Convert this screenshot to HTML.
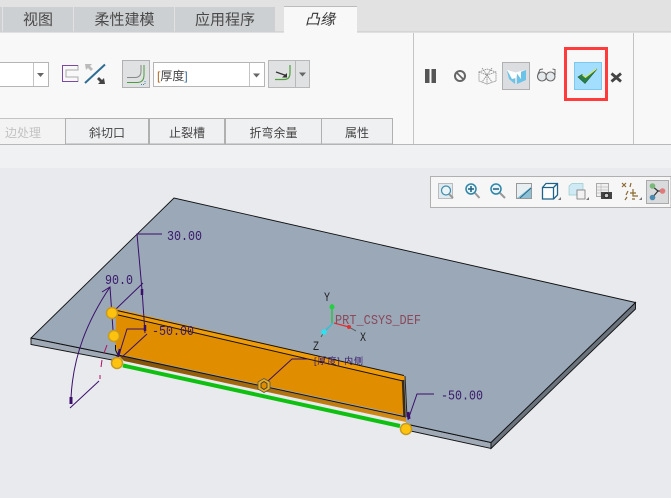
<!DOCTYPE html>
<html><head><meta charset="utf-8"><style>
html,body{margin:0;padding:0}
body{width:671px;height:498px;overflow:hidden;background:#e8eaee}
svg{display:block;font-family:"Liberation Sans","Noto Sans CJK SC",sans-serif}
</style></head><body>
<svg width="671" height="498" viewBox="0 0 671 498" xmlns="http://www.w3.org/2000/svg">
<defs>
<linearGradient id="br" x1="0" y1="0" x2="0" y2="1"><stop offset="0" stop-color="#7a4c08"/><stop offset="1" stop-color="#d89018"/></linearGradient>
</defs>
<!-- ribbon background -->
<rect width="671" height="32" fill="#e2e2e2"/>
<rect y="32" width="671" height="112" fill="#f8f8f8"/>
<rect y="31.500" width="671" height="1" fill="#c8c8c8"/>
<rect y="144" width="671" height="24" fill="#f0f1f3"/>
<rect y="144" width="671" height="1" fill="#b8b8b8"/>
<!-- tabs -->
<rect x="0" y="7" width="2" height="25" fill="#cdd0d2"/>
<rect x="3" y="7" width="70" height="25" fill="#cdd0d2"/>
<rect x="74" y="7" width="100" height="25" fill="#cdd0d2"/>
<rect x="175" y="7" width="100" height="25" fill="#cdd0d2"/>
<rect x="284" y="6" width="73" height="27" fill="#f8f8f8"/>
<rect x="284" y="6" width="73" height="1" fill="#bbb"/>
<g font-size="15" fill="#4a4a4a" text-anchor="middle">
<text x="38" y="24.500">视图</text>
<text x="124.500" y="24.500">柔性建模</text>
<text x="225" y="24.500">应用程序</text>
<text x="320" y="24.500" font-style="italic" fill="#333">凸缘</text>
</g>
<!-- dropdown 1 -->
<rect x="-2" y="62.500" width="50.500" height="24" fill="#fff" stroke="#b5b5b5"/>
<line x1="33.500" y1="63" x2="33.500" y2="86" stroke="#c4c4c4"/>
<path d="M37 73h7l-3.500 4z" fill="#666"/>
<!-- profile icon -->
<path d="M62.500 65.500H78V70H66V77H78V81.500H62.500Z" fill="none" stroke="#aaa" stroke-width="1"/>
<path d="M78 65.500H62.500V81.500H78" fill="none" stroke="#7a4aa0" stroke-width="1"/>
<path d="M85 83L105 64.500" stroke="#2f6d94" stroke-width="2"/>
<path d="M85 64h7l-2 2 3 3-2 2-3-3-2 2z" fill="#bbb"/>
<path d="M105 84h-7l2-2-3-3 2-2 3 3 2-2z" fill="#444"/>
<!-- bend button -->
<rect x="122.500" y="60.500" width="27" height="27" fill="#e0e1e2" stroke="#b0b0b0"/>
<path d="M127 77.500H135Q141 77.500 141 71V65" fill="none" stroke="#888" stroke-width="1"/>
<path d="M127 82.500H137Q144 82.500 144 75V65" fill="none" stroke="#4e9a40" stroke-width="1"/>
<path d="M141 84.500h4M145 81v4" stroke="#3a8ab0" stroke-width="1" stroke-dasharray="1 1" fill="none"/>
<!-- thickness dropdown -->
<rect x="153.500" y="62.500" width="111" height="24" fill="#fff" stroke="#b5b5b5"/>
<line x1="249.500" y1="63" x2="249.500" y2="86" stroke="#c4c4c4"/>
<path d="M253 73.500h7l-3.500 4z" fill="#666"/>
<text x="157" y="80" font-size="12" fill="#444"><tspan fill="#b06a20">[</tspan>厚度<tspan fill="#3a6ea0">]</tspan></text>
<!-- flip button -->
<rect x="268.500" y="60.500" width="27" height="27" fill="#e0e1e2" stroke="#b8b8b8"/>
<rect x="295.500" y="60.500" width="14" height="27" fill="#e0e1e2" stroke="#b8b8b8"/>
<path d="M275 79.500H284Q290 79.500 290 73V65" fill="none" stroke="#4ea040" stroke-width="1.200"/>
<path d="M276 72L286 75.500" fill="none" stroke="#333" stroke-width="1.200"/>
<path d="M287 73V77.500H282Z" fill="#333"/>
<path d="M299 72.500h7l-3.500 4z" fill="#666"/>
<!-- lower tabs -->
<rect x="0" y="118" width="65" height="26" fill="#f3f3f3"/>
<g fill="#eff0f2" stroke="#b0b0b0">
<rect x="65.500" y="118.500" width="83" height="25.500"/>
<rect x="149.500" y="118.500" width="75" height="25.500"/>
<rect x="225.500" y="118.500" width="96" height="25.500"/>
<rect x="321.500" y="118.500" width="71" height="25.500"/>
</g>
<rect x="0" y="118" width="65" height="1" fill="#c4c4c4"/>
<g font-size="12" fill="#444" text-anchor="middle">
<text x="23" y="137" fill="#c2c2c2">边处理</text>
<text x="107" y="137">斜切口</text>
<text x="187" y="137">止裂槽</text>
<text x="273.500" y="137">折弯余量</text>
<text x="357" y="137">属性</text>
</g>
<!-- separators -->
<line x1="413.500" y1="33" x2="413.500" y2="144" stroke="#c4c4c4"/>
<line x1="633.500" y1="33" x2="633.500" y2="144" stroke="#c4c4c4"/>
<!-- right controls -->
<rect x="425" y="69" width="4.500" height="14" fill="#555"/>
<rect x="431.500" y="69" width="4.500" height="14" fill="#555"/>
<circle cx="460" cy="76" r="5" fill="none" stroke="#666" stroke-width="2"/>
<line x1="456.500" y1="72.500" x2="463.500" y2="79.500" stroke="#666" stroke-width="1.700"/>
<g fill="none" stroke="#888" stroke-width=".8" stroke-dasharray="1.500 .6">
<path d="M479 72L487 75V84L479 81ZM487 75L496 72V81L487 84ZM479 72L487 69L496 72M482 68L492 82M492 68L482 82"/>
</g>
<rect x="502.500" y="62.500" width="27" height="27" fill="#dcdde0" stroke="#b0b0b0"/>
<path d="M507 71L515 73.500V84L509 79Z" fill="#6cc3e8"/>
<path d="M517 73.500L526 70V80L517 84Z" fill="#6cc3e8"/>
<path d="M507 70L516 72.500L526 69.500L521 71.500L521 79L517 73.500L516 78L512 79Z" fill="#fff"/>
<g fill="#e4e9ec" stroke="#666" stroke-width="1.100">
<circle cx="542" cy="76.500" r="4.500"/><circle cx="550.500" cy="76.500" r="4.500"/>
</g>
<path d="M538 74L540 69.500L543 69M555 75V69.500L552.500 69" fill="none" stroke="#666"/>
<rect x="565.500" y="48.500" width="41" height="51" fill="none" stroke="#ff3b3b" stroke-width="3"/>
<rect x="574.500" y="62.500" width="27" height="27" fill="#a3defe" stroke="#7cc8ee"/>
<path d="M578 77L582 74.500L585.500 78L597 69L585 83.500Z" fill="#2a8048" stroke="#1f5f38" stroke-width=".6"/>
<path d="M582.500 75L585.500 77.500L596.500 69" fill="none" stroke="#dfe84a"/>
<path d="M611.500 73.500L621 81.500M621 73.500L611.500 81.500" stroke="#444" stroke-width="2.800"/>
<!-- view toolbar -->
<rect x="430.500" y="176.500" width="240.500" height="31" fill="#f6f6f6" stroke="#b0b0b0"/>
<rect x="438.500" y="183.500" width="14" height="15" fill="#dfeaf0" stroke="#bbb"/>
<circle cx="446" cy="190.500" r="4.500" fill="#eaf4f8" stroke="#3d8aa8" stroke-width="1.200"/>
<line x1="449" y1="194" x2="453" y2="198" stroke="#999" stroke-width="2"/>
<circle cx="471" cy="189" r="5" fill="#eaf4f8" stroke="#2c86a8" stroke-width="1.500"/>
<path d="M468 189h6M471 186v6" stroke="#1f5f80" stroke-width="1.500"/>
<line x1="475" y1="193" x2="479.500" y2="198" stroke="#999" stroke-width="2"/>
<circle cx="496" cy="189" r="5" fill="#eaf4f8" stroke="#2c86a8" stroke-width="1.500"/>
<path d="M493 189h6" stroke="#1f5f80" stroke-width="1.500"/>
<line x1="500" y1="193" x2="505" y2="198" stroke="#999" stroke-width="2"/>
<rect x="516.500" y="183.500" width="15" height="15" fill="#8fc1d6" stroke="#999"/>
<path d="M517 184h14v3L517 198Z" fill="#e8eff2"/>
<path d="M520 198L531 188" stroke="#1f6a8a"/>
<path d="M542.500 187.500H553.500V199H542.500ZM542.500 187.500L546 183.500H557.500V195L553.500 199M553.500 187.500L557.500 183.500" fill="#fff" stroke="#1f6488" stroke-width="1.300"/>
<path d="M558 200l3-3v3z" fill="#777"/>
<path d="M569 186L572 183.500H583V195H569Z" fill="#cfe9f5" stroke="#9cc" stroke-width=".7"/>
<rect x="577" y="190" width="8" height="9" fill="#f2f2f2" stroke="#777" stroke-width=".8"/>
<path d="M586 200l3-3v3z" fill="#777"/>
<rect x="596.500" y="183.500" width="12" height="13" fill="#f0f0f0" stroke="#aaa"/>
<path d="M597 187h11M597 190h11M597 193h11M601 184v12" stroke="#bbb" stroke-width=".7"/>
<rect x="601" y="192" width="11" height="7" fill="#444"/>
<circle cx="606.500" cy="195.500" r="2.300" fill="#ccc" stroke="#222"/>
<g stroke="#8a6a30" stroke-width="1.200" fill="none">
<path d="M622 183l4 4M626 183l-4 4M631 183l-1 4M628 191l-2 4M627 197l-2 3M633 189v7h5M630 193h6M632 199h3"/>
</g>
<path d="M639 200l3-3v3z" fill="#777"/>
<rect x="646.500" y="180.500" width="22" height="23" fill="#d9dadb" stroke="#aaa"/>
<path d="M652 186L658 191L652 198M658 191H662" fill="none" stroke="#333" stroke-width="1.200"/>
<circle cx="652.500" cy="186" r="2.800" fill="#7ab87a"/>
<circle cx="662.500" cy="191" r="2.800" fill="#e07a7a"/>
<circle cx="652.500" cy="197.500" r="2.800" fill="#4a8ab0"/>
<!-- plate sides -->
<path d="M31 338V344.500L117 361V355.500Z" fill="#a0aab6" stroke="#111" stroke-width=".9"/>
<path d="M406 424V430L491 448.500V442.500Z" fill="#a0aab6" stroke="#111" stroke-width=".9"/>
<path d="M491 448.500L635.500 309V302.500L491 442.500Z" fill="#6b737d" stroke="#111" stroke-width=".9"/>
<!-- plate top -->
<path d="M31 338L174 198L635.500 302.500L491 442.500L406 424V417L118 355L117 355.500Z" fill="#9aa8b8"/>
<path d="M117 355.500L31 338L174 198L635.500 302.500L491 442.500L406 424" fill="none" stroke="#111" stroke-width=".9"/>
<!-- flange -->
<path d="M116 314L403 380V415L118 354L115.500 345Z" fill="#e08e00"/>
<path d="M113 308L404 375.500L405 381L115 314.500Z" fill="#f09c08"/>
<path d="M117 310.500L404 375.500" stroke="#111" stroke-width="1" fill="none"/>
<path d="M116 314.500L403 381" stroke="#111" stroke-width="1" fill="none"/>
<path d="M118 355L406 417V422L124 361Z" fill="url(#br)"/>
<path d="M118 355L406 417" stroke="#111" stroke-width="1" fill="none"/>
<path d="M403 380L404.500 416" stroke="#3a2a10" stroke-width="2.500" fill="none"/>
<path d="M405 376L407 417" stroke="#222" stroke-width="1" fill="none"/>
<path d="M115.500 345V350L118 355" stroke="#111" fill="none"/>
<path d="M123 365.500L400 426" stroke="#10c010" stroke-width="4" fill="none"/>
<!-- dimension lines -->
<g fill="none" stroke="#3a0f6a" stroke-width="1">
<path d="M162 234H137L142 290L145 333"/>
<path d="M143 283L115 310"/>
<path d="M102 292L110 287L113 330"/>
<path d="M110 287C88 320 73 355 71 398"/>
<path d="M70 408L99 381"/>
<path d="M145 329H127L118 358"/>
<path d="M147 334L122 357"/>
<path d="M268 381L292 359H308"/>
<path d="M434 394H417L408 420"/>
<path d="M71 397v7" stroke-width="3"/>
<path d="M142 289v6" stroke-width="2.500"/>
<path d="M145 325v6" stroke-width="2.500"/>
<path d="M120 349l-2 8" stroke-width="2.500"/>
<path d="M408 412l1 7" stroke-width="3"/>
</g>
<g fill="none" stroke="#b01060" stroke-width="1"><path d="M107 345L104 353M102 360L101 367M100 375L100 379"/></g>
<g font-family="Liberation Mono,monospace" font-size="14" fill="#3a1a6a" lengthAdjust="spacingAndGlyphs">
<text x="167" y="240" textLength="35" lengthAdjust="spacingAndGlyphs">30.00</text>
<text x="105" y="284" textLength="28" lengthAdjust="spacingAndGlyphs">90.0</text>
<text x="152" y="335" textLength="42" lengthAdjust="spacingAndGlyphs">-50.00</text>
<text x="441" y="399.500" textLength="42" lengthAdjust="spacingAndGlyphs">-50.00</text>
</g>
<!-- handles -->
<g fill="#ffc20e" stroke="#c69a20" stroke-width="1.500">
<circle cx="112" cy="313" r="5.500"/>
<circle cx="114" cy="336" r="5.500"/>
<circle cx="117" cy="363" r="5.500"/>
<circle cx="406" cy="429" r="5.500"/>
</g>
<path d="M264 378.500L270 382V389L264 392.500L258 389V382Z" fill="#e8b020" stroke="#555" stroke-width=".8"/>
<path d="M264 381.500L267 383.500V387.500L264 389.500L261 387.500V383.500Z" fill="#e08e00" stroke="#333" stroke-width=".8"/>
<!-- csys -->
<path d="M332 323V304" stroke="#22c040" stroke-width="1.300"/>
<circle cx="332" cy="307" r="2.500" fill="#22d040"/>
<path d="M334 323L349 327" stroke="#e03030" stroke-width="1.300"/>
<path d="M349 327L356 331" stroke="#555"/>
<circle cx="349" cy="327" r="2" fill="#e03030"/>
<path d="M333 323L324 332" stroke="#30c0d0" stroke-width="1.300"/>
<path d="M324 332L321 337" stroke="#555"/>
<circle cx="324" cy="332" r="2.800" fill="#2fe0ee"/>
<g font-family="Liberation Mono,monospace" font-size="13">
<text x="324" y="301" fill="#222" textLength="6" lengthAdjust="spacingAndGlyphs">Y</text>
<text x="360" y="341" fill="#222" textLength="6" lengthAdjust="spacingAndGlyphs">X</text>
<text x="313" y="350" fill="#222" textLength="6" lengthAdjust="spacingAndGlyphs">Z</text>
<text x="335" y="324" fill="#8a4a5a" textLength="86" lengthAdjust="spacingAndGlyphs" font-size="14">PRT_CSYS_DEF</text>
</g>
<text x="314" y="364" font-size="9" fill="#3a1a6a" textLength="49" font-family="Liberation Sans,Noto Sans CJK SC,sans-serif">[厚度] 内侧</text>
</svg>
</body></html>
